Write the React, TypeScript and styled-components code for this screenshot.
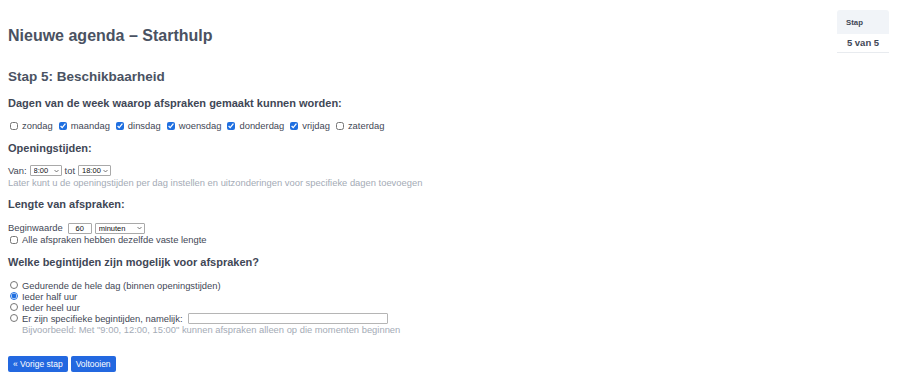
import React from "react";
import styled, { createGlobalStyle } from "styled-components";

const Global = createGlobalStyle`
  html, body { margin: 0; padding: 0; background: #ffffff; }
  body { font-family: "Liberation Sans", Arial, sans-serif; color: #3f4756; }
  * { box-sizing: border-box; }
`;

const Page = styled.div`
  display: flex;
  align-items: flex-start;
  padding: 10px 11px 0 8px;
`;

const Main = styled.main`
  flex: 1;
  display: flex;
  flex-direction: column;
`;

const Title = styled.h1`
  margin: 16px 0 0;
  font-size: 16px;
  line-height: 20px;
  font-weight: 700;
  color: #4a5262;
`;

const StepTitle = styled.h2`
  margin: 22px 0 0;
  font-size: 13.5px;
  line-height: 18px;
  font-weight: 700;
  color: #4a5262;
`;

const SectionTitle = styled.h3<{ $top?: number }>`
  margin: ${(p) => p.$top ?? 9}px 0 0;
  font-size: 11px;
  line-height: 14px;
  font-weight: 700;
  color: #3f4756;
`;

const Block = styled.div<{ $top?: number }>`
  margin-top: ${(p) => p.$top ?? 9}px;
  display: flex;
  flex-direction: column;
  font-size: 9.4px;
  line-height: 11.5px;
`;

const DayRow = styled.div`
  display: flex;
  align-items: center;
  gap: 4px;
`;

const Opt = styled.label`
  display: inline-flex;
  align-items: center;
  gap: 4px;
  white-space: nowrap;
`;

const Check = styled.input.attrs({ type: "checkbox" })`
  margin: 0 0 0 2px;
  width: 8px;
  height: 8px;
  accent-color: #1f6fe0;
`;

const Radio = styled.input.attrs({ type: "radio" })`
  margin: 0 0 0 2px;
  width: 8px;
  height: 8px;
  accent-color: #1f6fe0;
`;

const Line = styled.div`
  display: flex;
  align-items: center;
  gap: 3px;
  height: 12px;
`;

const Hint = styled.div<{ $indent?: number }>`
  color: #a4abb6;
  padding-left: ${(p) => p.$indent ?? 0}px;
`;

const SelectWrap = styled.span<{ $w: number }>`
  position: relative;
  display: inline-flex;
  width: ${(p) => p.$w}px;
  height: 11px;
`;

const Select = styled.select`
  appearance: none;
  -webkit-appearance: none;
  width: 100%;
  height: 100%;
  margin: 0;
  padding: 0 0 0 3px;
  border: 1px solid #a9a9a9;
  border-radius: 1px;
  background: #fff;
  font-family: "Liberation Sans", Arial, sans-serif;
  font-size: 7.5px;
  line-height: 9px;
  color: #111;
`;

const Chevron = styled.svg`
  position: absolute;
  right: 3px;
  top: 3.5px;
  width: 5px;
  height: 4px;
  pointer-events: none;
`;

const NumInput = styled.input`
  width: 24px;
  height: 11px;
  margin: 0 0 0 2px;
  padding: 0;
  border: 1px solid #a9a9a9;
  border-radius: 1px;
  font-family: "Liberation Sans", Arial, sans-serif;
  font-size: 7.5px;
  text-align: center;
  color: #111;
`;

const TextInput = styled.input`
  width: 200px;
  height: 11px;
  margin: 0 0 0 1px;
  padding: 0 2px;
  border: 1px solid #b5b5b5;
  border-radius: 1px;
  font-size: 8px;
`;

const RadioList = styled.div`
  display: flex;
  flex-direction: column;
  margin-top: 11px;
  font-size: 9.4px;
  line-height: 11px;
`;

const Buttons = styled.div`
  display: flex;
  gap: 3px;
  margin-top: 21px;
`;

const Button = styled.button`
  height: 16px;
  padding: 0 5px;
  border: none;
  border-radius: 2px;
  background: #2368e0;
  color: #ffffff;
  font-family: "Liberation Sans", Arial, sans-serif;
  font-size: 8.5px;
  line-height: 16px;
`;

const StepTable = styled.table`
  border-collapse: collapse;
  width: 52px;
  font-size: 9.5px;
  color: #3f4756;
`;

const Th = styled.th`
  background: #f1f4f8;
  text-align: left;
  font-size: 7.8px;
  font-weight: 700;
  padding: 0 0 0 9px;
  height: 24px;
  border-radius: 3px 3px 0 0;
`;

const Td = styled.td`
  text-align: center;
  font-weight: 700;
  height: 18px;
  padding: 0;
  border-bottom: 1px solid #e8ebef;
`;

function Dropdown({ w, value, options }: { w: number; value: string; options: string[] }) {
  return (
    <SelectWrap $w={w}>
      <Select defaultValue={value}>
        {options.map((o) => (
          <option key={o}>{o}</option>
        ))}
      </Select>
      <Chevron viewBox="0 0 10 6">
        <path d="M1 1l4 4 4-4" fill="none" stroke="#333" strokeWidth="1.3" />
      </Chevron>
    </SelectWrap>
  );
}

const days: [string, boolean][] = [
  ["zondag", false],
  ["maandag", true],
  ["dinsdag", true],
  ["woensdag", true],
  ["donderdag", true],
  ["vrijdag", true],
  ["zaterdag", false],
];

export default function App() {
  return (
    <>
      <Global />
      <Page>
        <Main>
          <Title>Nieuwe agenda – Starthulp</Title>
          <StepTitle>Stap 5: Beschikbaarheid</StepTitle>

          <SectionTitle $top={10}>Dagen van de week waarop afspraken gemaakt kunnen worden:</SectionTitle>
          <Block $top={10}>
            <DayRow>
              {days.map(([d, c]) => (
                <Opt key={d}>
                  <Check defaultChecked={c} />
                  {d}
                </Opt>
              ))}
            </DayRow>
          </Block>

          <SectionTitle $top={9}>Openingstijden:</SectionTitle>
          <Block $top={10}>
            <Line>
              Van:
              <Dropdown w={32} value="8:00" options={["7:00", "8:00", "9:00"]} />
              tot
              <Dropdown w={33} value="18:00" options={["17:00", "18:00", "19:00"]} />
            </Line>
            <Hint>Later kunt u de openingstijden per dag instellen en uitzonderingen voor specifieke dagen toevoegen</Hint>
          </Block>

          <SectionTitle $top={9}>Lengte van afspraken:</SectionTitle>
          <Block $top={11}>
            <Line>
              Beginwaarde
              <NumInput defaultValue="60" />
              <Dropdown w={50} value="minuten" options={["minuten", "uren"]} />
            </Line>
            <Opt>
              <Check />
              Alle afspraken hebben dezelfde vaste lengte
            </Opt>
          </Block>

          <SectionTitle $top={9}>Welke begintijden zijn mogelijk voor afspraken?</SectionTitle>
          <RadioList>
            <Opt>
              <Radio name="t" />
              Gedurende de hele dag (binnen openingstijden)
            </Opt>
            <Opt>
              <Radio name="t" defaultChecked />
              Ieder half uur
            </Opt>
            <Opt>
              <Radio name="t" />
              Ieder heel uur
            </Opt>
            <Opt>
              <Radio name="t" />
              Er zijn specifieke begintijden, namelijk:
              <TextInput />
            </Opt>
            <Hint $indent={14}>Bijvoorbeeld: Met "9:00, 12:00, 15:00" kunnen afspraken alleen op die momenten beginnen</Hint>
          </RadioList>

          <Buttons>
            <Button>« Vorige stap</Button>
            <Button>Voltooien</Button>
          </Buttons>
        </Main>
        <aside>
          <StepTable>
            <thead>
              <tr>
                <Th>Stap</Th>
              </tr>
            </thead>
            <tbody>
              <tr>
                <Td>5 van 5</Td>
              </tr>
            </tbody>
          </StepTable>
        </aside>
      </Page>
    </>
  );
}
